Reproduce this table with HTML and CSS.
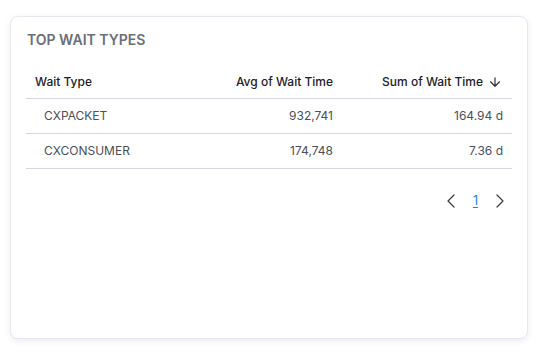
FILE: index.html
```html
<!DOCTYPE html>
<html>
<head>
<meta charset="utf-8">
<link rel="stylesheet" href="styles.css">
</head>
<body>
<div class="card">
  <h2 class="title">TOP WAIT TYPES</h2>
  <table class="grid">
    <thead>
      <tr>
        <th class="c1">Wait Type</th>
        <th class="c2">Avg of Wait Time</th>
        <th class="c3"><span class="sortwrap">Sum of Wait Time <svg class="sort" width="12" height="10" viewBox="0 0 12 10"><path d="M6 0.8v8.4M1.5 4.8l4.5 4.4 4.5-4.4" fill="none" stroke="#2b2f36" stroke-width="1.2" stroke-linecap="round" stroke-linejoin="round"/></svg></span></th>
      </tr>
    </thead>
    <tbody>
      <tr><td class="c1">CXPACKET</td><td class="c2">932,741</td><td class="c3">164.94 d</td></tr>
      <tr><td class="c1">CXCONSUMER</td><td class="c2">174,748</td><td class="c3">7.36 d</td></tr>
    </tbody>
  </table>
  <div class="pager">
    <svg class="chev" width="8" height="14" viewBox="0 0 8 14"><path d="M7 1L1 7l6 6" fill="none" stroke="#3a3e46" stroke-width="1.3" stroke-linecap="round" stroke-linejoin="round"/></svg>
    <a class="page">1</a>
    <svg class="chev" width="8" height="14" viewBox="0 0 8 14"><path d="M1 1l6 6-6 6" fill="none" stroke="#3a3e46" stroke-width="1.3" stroke-linecap="round" stroke-linejoin="round"/></svg>
  </div>
</div>
</body>
</html>
```
FILE: styles.css
```css
html, body { margin: 0; padding: 0; background: #ffffff; }
body {
  padding: 16px 10px 14px 10px;
  font-family: Inter, "Noto Sans", sans-serif;
}
.card {
  box-sizing: border-box;
  height: 323px;
  background: #fff;
  border: 1px solid #e6e8ef;
  border-radius: 8px;
  box-shadow: 0 2px 6px rgba(60, 70, 110, 0.10);
  padding: 14px 15px 0 15px;
}
.title {
  margin: 0 0 0 1px;
  font-size: 14px;
  font-weight: 600;
  color: #6a6e7a;
  line-height: 18px;
}
.grid {
  width: 100%;
  border-collapse: collapse;
  margin-top: 16px;
}
.grid th {
  font-size: 12px;
  font-weight: 500;
  color: #1e2127;
  height: 33px;
  padding: 0 9px;
  border-bottom: 1px solid #d4d8e2;
  vertical-align: middle;
  line-height: 16px;
}
.grid td {
  font-size: 12px;
  color: #4b4f58;
  height: 34px;
  padding: 0 9px;
  border-bottom: 1px solid #d4d8e2;
  line-height: 16px;
}
.grid .c1 { text-align: left; }
.grid td.c1 { padding-left: 18px; }
.grid .c2 { text-align: right; width: 160px; }
.grid .c3 { text-align: right; width: 152px; }
.sortwrap { display: inline-flex; align-items: center; gap: 6px; }
.sort { margin-right: 2px; }
.pager {
  display: flex;
  justify-content: flex-end;
  align-items: center;
  gap: 18px;
  margin-top: 24px;
  padding-right: 8px;
}
.page {
  font-size: 12.5px;
  color: #1a7fe8;
  text-decoration: underline;
  text-underline-offset: 2px;
  line-height: 16px;
}
```
